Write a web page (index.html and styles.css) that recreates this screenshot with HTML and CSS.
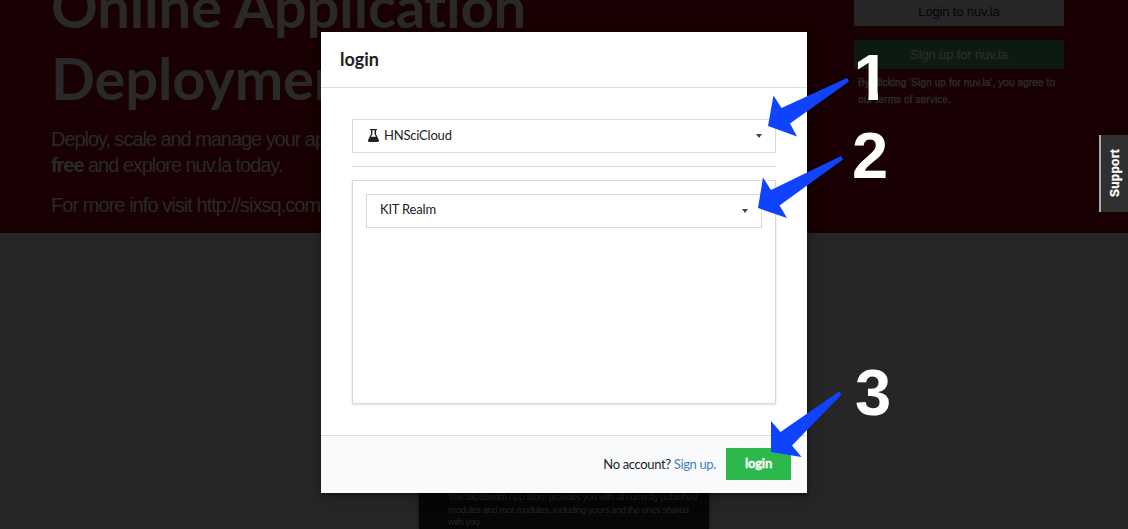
FILE: index.html
```html
<!DOCTYPE html>
<html lang="en">
<head>
<meta charset="utf-8">
<title>Nuvla login</title>
<link rel="stylesheet" href="styles.css">
</head>
<body>
<div class="page">
  <section class="hero">
    <div class="intro">
      <h1>Online Application<br>Deployment</h1>
      <p class="lead">Deploy, scale and manage your apps<br><b>free</b> and explore nuv.la today.</p>
      <p class="info">For more info visit http://sixsq.com</p>
    </div>
    <div class="account">
      <div class="button plain">Login to nuv.la</div>
      <div class="button signup">Sign up for nuv.la</div>
      <p class="terms">By clicking 'Sign up for nuv.la', you agree to<br>our terms of service.</p>
    </div>
  </section>
  <section class="store">
    <div class="tour">The SlipStream App Store provides you with all currently published<br>modules and root modules, including yours and the ones shared<br>with you.</div>
  </section>
</div>

<div class="support"><span>Support</span></div>

<div class="modal">
  <div class="modal-header">login</div>
  <div class="modal-body">
    <div class="dropdown">
      <svg class="flask" width="11" height="13" viewBox="0 0 11 13"><path d="M2 0H9V1.300H8V5L10.800 10.700Q11.500 13 9.500 13H1.500Q-.5 13 .2 10.700L3 5V1.300H2ZM4.400 1.300V5.300L3 7.800H8L6.600 5.300V1.300Z" fill="#222" fill-rule="evenodd"/></svg>
      <span>HNSciCloud</span>
      <i class="caret"></i>
    </div>
    <div class="divider"></div>
    <div class="segment">
      <div class="dropdown"><span>KIT Realm</span><i class="caret"></i></div>
    </div>
  </div>
  <div class="modal-footer">
    <span class="ask">No account? <a>Sign up.</a></span>
    <div class="submit">login</div>
  </div>
</div>

<svg class="arrows" width="1128" height="529" viewBox="0 0 1128 529" fill="#0f43ff">
  <path d="M768 126L773.500 95.500L781.500 108L847 78L849 81.500L790 123.500L797 136.500Z"/>
  <path d="M758 208L763 177.500L771 190L841 156L843 159.500L779.500 205.500L787 218Z"/>
  <path d="M771 452V421L780.500 432L839 391.500L841.500 394.500L792 445.500L801.500 457Z"/>
</svg>
<div class="step one">1</div>
<div class="step two">2</div>
<div class="step three">3</div>
</body>
</html>
```
FILE: styles.css
```css
* { box-sizing: border-box; }
body { margin: 0; width: 1128px; height: 529px; overflow: hidden; position: relative; background: #262626; font-family: "Liberation Sans", Arial, sans-serif; }
p, h1 { margin: 0; }
.page { height: 529px; overflow: hidden; display: flex; flex-direction: column; white-space: nowrap; }
.hero { flex: 0 0 233px; overflow: hidden; display: flex; background: #190002; color: #292929; padding-left: 51px; }
.intro { width: 803px; }
.intro h1 { margin-top: -30px; font: 700 58px/72px Lato, sans-serif; letter-spacing: -.2px; }
.lead, .info { font-size: 20px; line-height: 26px; letter-spacing: -1.05px; }
.lead { margin-top: 12px; }
.info { margin-top: 14px; letter-spacing: -.95px; }
.account { width: 210px; }
.button { text-align: center; }
.plain { height: 26px; background: #262626; border: 1px solid #202424; border-top: 0; color: #050505; font-size: 13px; line-height: 24px; letter-spacing: -.15px; }
.signup { height: 29px; margin-top: 14px; background: #0d1a0f; color: #292b29; font-size: 13px; line-height: 29px; letter-spacing: -.15px; -webkit-text-stroke: .4px #292b29; }
.terms { margin: 5px 0 0 4px; font-size: 10px; line-height: 17px; letter-spacing: .11px; -webkit-text-stroke: .5px #292929; }
.store { flex: 1; display: flex; justify-content: center; align-items: flex-end; }
.tour { width: 290px; height: 60px; background: #060606; color: #252525; box-shadow: 0 0 4px #151515; padding: 22px 0 0 29px; font-size: 9.500px; line-height: 12.500px; letter-spacing: -.48px; }
.support { position: absolute; left: 1099px; top: 135px; width: 29px; height: 77px; display: flex; align-items: center; justify-content: center; background: #303030; border-left: 2px solid #aaa; }
.support span { writing-mode: vertical-rl; transform: rotate(180deg); color: #fff; font-size: 12px; font-weight: 700; letter-spacing: .3px; -webkit-text-stroke: .3px #fff; }
.modal { position: absolute; left: 321px; top: 32px; width: 486px; height: 461px; display: flex; flex-direction: column; background: #fff; box-shadow: 1px 3px 3px rgba(0,0,0,.25), 1px 3px 12px 2px rgba(0,0,0,.25); font-family: Lato, sans-serif; color: #222; }
.modal-header { height: 56px; padding-left: 19px; border-bottom: 1px solid #dedede; font-size: 18px; font-weight: 700; line-height: 55px; }
.modal-body { flex: 1; padding: 31px; }
.dropdown { height: 34px; border: 1px solid #d9dadb; display: flex; align-items: center; padding: 0 13px 2px 15px; font-size: 13px; letter-spacing: -.2px; }
.flask { margin-right: 5px; }
.caret { margin-left: auto; margin-top: 2px; border: 3.500px solid transparent; border-top: 4px solid #444; border-bottom: 0; }
.divider { height: 1px; margin: 13px 0; background: #dadada; }
.segment { height: 224px; padding: 13px; border: 1px solid #d9dadb; box-shadow: 0 1px 2px rgba(34,36,38,.15); }
.segment .dropdown { padding-left: 13px; padding-bottom: 4px; }
.segment .caret { margin-top: 4px; }
.modal-footer { height: 58px; display: flex; align-items: center; justify-content: flex-end; padding: 0 16px 2px 0; background: #f9fafb; border-top: 1px solid #dedede; font-size: 13px; }
.ask { margin-right: 10px; letter-spacing: -.35px; }
.ask a { color: #4183c4; }
.submit { width: 65px; height: 32px; background: #2db84c; color: #fff; text-align: center; font-weight: 700; line-height: 31px; letter-spacing: -.2px; -webkit-text-stroke: .3px #fff; }
.arrows { position: absolute; left: 0; top: 0; }
.step { position: absolute; color: #fff; font-size: 65px; line-height: 64px; font-weight: 700; }
.one { left: 853.500px; top: 46px; clip-path: polygon(0 0, 24.400px 0, 24.400px 100%, 15px 100%, 15px 46px, 0 46px); }
.two { left: 852px; top: 124px; }
.three { left: 855px; top: 361px; }
```
